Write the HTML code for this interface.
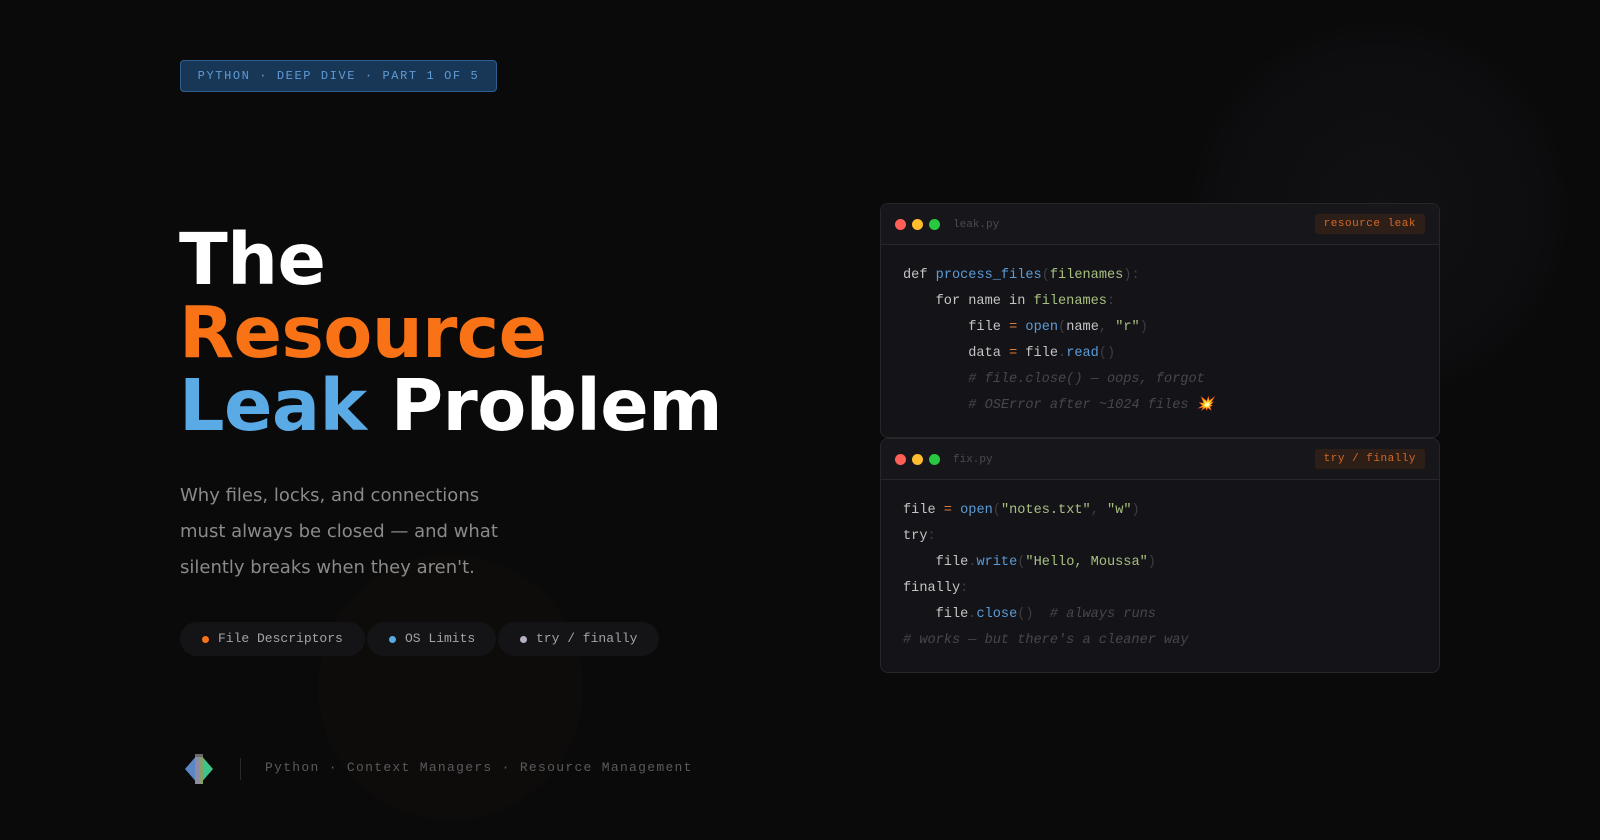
<!DOCTYPE html>
<html><head><meta charset="utf-8"><style>
*{margin:0;padding:0;box-sizing:border-box}
body{width:1600px;height:840px;background:#0a0a0b;overflow:hidden;position:relative;font-family:"Liberation Sans",sans-serif}
.mono{font-family:"Liberation Mono",monospace}
.glow1{position:absolute;left:318px;top:555px;width:265px;height:265px;border-radius:50%;background:#0e0c0b}
.glow2{position:absolute;left:1190px;top:20px;width:380px;height:380px;border-radius:50%;background:radial-gradient(circle,#111113 0%,#0d0d0f 60%,#0a0a0b 72%)}
.badge{position:absolute;left:180px;top:60px;width:317px;height:32px;border:1px solid #2e5f8f;background:#183757;border-radius:4px;color:#5f9ad3;font-size:12px;letter-spacing:1.6px;line-height:30px;text-align:center}
h1{position:absolute;left:179px;top:223px;font-family:"DejaVu Sans",sans-serif;font-weight:bold;font-size:71.5px;line-height:73px;color:#fff;letter-spacing:-0.6px}
.o{color:#f97316}.b{color:#5aaae6}
.sub{position:absolute;left:180px;top:478px;font-family:"DejaVu Sans",sans-serif;font-size:18px;line-height:36px;color:#8a8a8a}
.pill{position:absolute;top:622px;height:34px;border-radius:17px;background:#141416;color:#a3a3a3;font-size:13px;line-height:34px;padding-left:38px}
.pill i{position:absolute;left:22px;top:14px;width:7px;height:7px;border-radius:50%}
.card{position:absolute;left:880px;width:560px;background:#141418;border:1px solid #26262b;border-radius:8px}
.bar{height:41px;border-bottom:1px solid #26262b;position:relative;background:#17171b;border-radius:8px 8px 0 0}
.dot{position:absolute;top:15px;width:11px;height:11px;border-radius:50%}
.fn{position:absolute;left:72px;top:15px;font-size:11px;color:#4a4a50}
.tag{position:absolute;right:14px;top:10px;height:20px;padding:0 9px;background:#2d1f17;border-radius:3px;color:#d2692a;font-size:11px;line-height:20px;letter-spacing:.5px}
pre{font-family:"Liberation Mono",monospace;font-size:13.6px;line-height:26px;color:#c4c4c4;padding:18px 22px}
.k{color:#c4c4c4}.f{color:#5b9bd8}.g{color:#a7c080}.p{color:#3d3d42}.e{color:#e07a35}.c{color:#46464c;font-style:italic}
.foot{position:absolute;left:265px;top:760px;font-size:13px;color:#5a5a5e;letter-spacing:1.3px}
.sep{position:absolute;left:240px;top:758px;width:1px;height:22px;background:#2a2a2e}
</style></head><body>
<div class="glow2"></div><div class="glow1"></div>
<div class="badge mono">PYTHON · DEEP DIVE · PART 1 OF 5</div>
<h1>The<br><span class="o">Resource</span><br><span class="b">Leak</span> Problem</h1>
<div class="sub">Why files, locks, and connections<br>must always be closed — and what<br>silently breaks when they aren't.</div>
<div class="pill mono" style="left:180px;width:185px"><i style="background:#f97316"></i>File Descriptors</div>
<div class="pill mono" style="left:367px;width:129px"><i style="background:#5aaae6"></i>OS Limits</div>
<div class="pill mono" style="left:498px;width:161px"><i style="background:#b8b0c0"></i>try / finally</div>

<div class="card" style="top:203px;height:235px">
 <div class="bar"><span class="dot" style="left:14px;background:#ff5f57"></span><span class="dot" style="left:31px;background:#febc2e"></span><span class="dot" style="left:48px;background:#28c840"></span><span class="fn mono">leak.py</span><span class="tag mono">resource leak</span></div>
<pre><span class="k">def</span> <span class="f">process_files</span><span class="p">(</span><span class="g">filenames</span><span class="p">):</span>
    for name in <span class="g">filenames</span><span class="p">:</span>
        file <span class="e">=</span> <span class="f">open</span><span class="p">(</span>name<span class="p">,</span> <span class="g">"r"</span><span class="p">)</span>
        data <span class="e">=</span> file<span class="p">.</span><span class="f">read</span><span class="p">()</span>
        <span class="c"># file.close() — oops, forgot</span>
        <span class="c"># OSError after ~1024 files 💥</span></pre>
</div>
<div class="card" style="top:438px;height:235px">
 <div class="bar"><span class="dot" style="left:14px;background:#ff5f57"></span><span class="dot" style="left:31px;background:#febc2e"></span><span class="dot" style="left:48px;background:#28c840"></span><span class="fn mono">fix.py</span><span class="tag mono">try / finally</span></div>
<pre>file <span class="e">=</span> <span class="f">open</span><span class="p">(</span><span class="g">"notes.txt"</span><span class="p">,</span> <span class="g">"w"</span><span class="p">)</span>
try<span class="p">:</span>
    file<span class="p">.</span><span class="f">write</span><span class="p">(</span><span class="g">"Hello, Moussa"</span><span class="p">)</span>
finally<span class="p">:</span>
    file<span class="p">.</span><span class="f">close</span><span class="p">()</span>  <span class="c"># always runs</span>
<span class="c"># works — but there's a cleaner way</span></pre>
</div>

<svg style="position:absolute;left:184px;top:752px" width="30" height="34" viewBox="0 0 30 34">
<polygon points="14,2 14,32 1,17" fill="#5b87c5"/><polygon points="16,2 16,32 29,17" fill="#3cc489"/>
<rect x="11" y="2" width="4" height="30" fill="#8f8aa6"/><rect x="15" y="2" width="4" height="30" fill="#86a06a"/>
<rect x="11" y="2" width="8" height="3" fill="#6a6a6a"/></svg>
<div class="sep"></div>
<div class="foot mono">Python · Context Managers · Resource Management</div>
</body></html>
